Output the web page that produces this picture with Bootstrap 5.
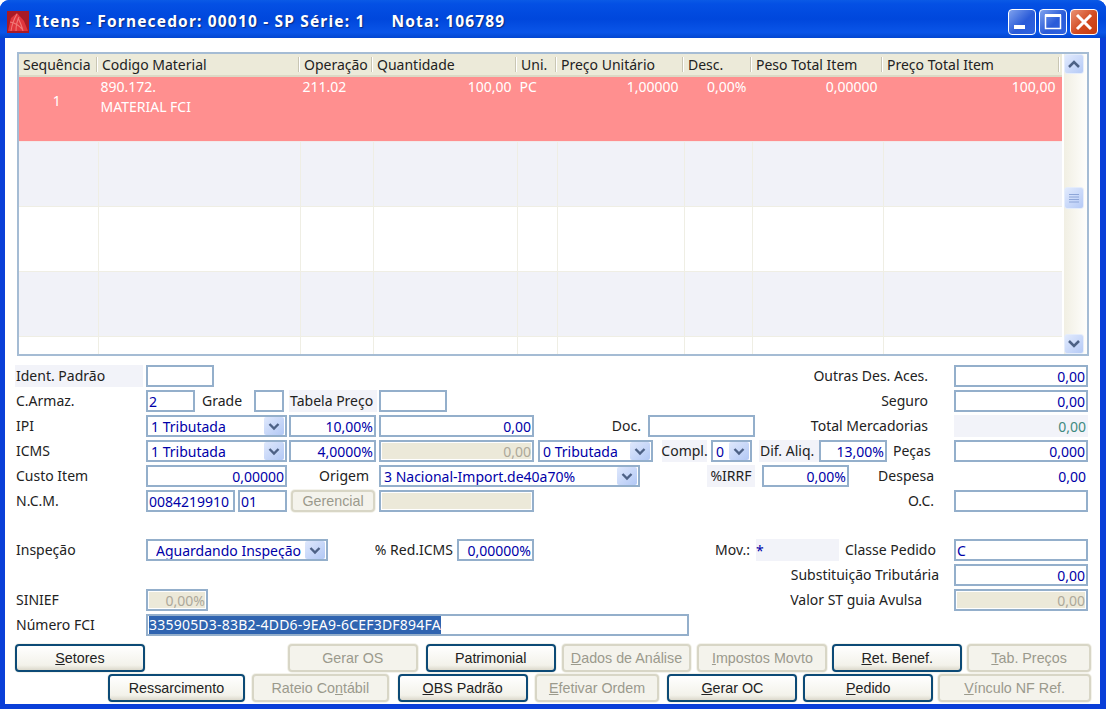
<!DOCTYPE html>
<html lang="pt">
<head>
<meta charset="utf-8">
<title>Itens</title>
<link rel="stylesheet" href="https://cdn.jsdelivr.net/npm/bootstrap@5.3.0/dist/css/bootstrap.min.css">
<style>
html,body{margin:0;height:709px;overflow:hidden;background:#fff}
body{font-family:"Noto Sans","DejaVu Sans",sans-serif;font-size:14px;color:#222}
.xpwin{width:1106px;height:709px;background:#0a3fd8;border-radius:9px 9px 0 0}
.xpbar{height:38px;padding:5px 8px 0 7px;border-radius:9px 9px 0 0;background:linear-gradient(#0a5ae6 0,#0450e4 10%,#0047dc 50%,#0a55e8 85%,#0246d0 100%)}
.xptitle{font-weight:700;font-size:15.5px;color:#fff;letter-spacing:1.17px;text-shadow:1px 1px 1px #0a2a80;white-space:pre;margin-left:6px}
.xpbtn{width:28px;height:26px;border:1px solid #fff;border-radius:4px;background:linear-gradient(135deg,#7fa2ee,#2a5bd8 55%,#2f63e0);margin-left:3px;padding:0}
.xpclose{background:linear-gradient(135deg,#ea9274,#d24a20 55%,#c63c10)}
.xpbody{flex:1 1 auto;margin:0 6px 5px 5px;background:#fff;padding:14px 0 0 10px;min-height:0}
.gridbox{width:1072px;height:304px;border:2px solid #a5bcd4;margin-left:2px;background:#fff}
.gridmain{width:1045px;overflow:hidden}
.xgrid{table-layout:fixed;width:1045px;margin:0;font-size:14px;border-collapse:collapse}
.xgrid>thead>tr>th{height:22px;padding:0 0 0 4px;font-weight:400;background:#ecead9;color:#222;border:0;border-bottom:2px solid #dcd9c6;white-space:nowrap;position:relative}
.xgrid>thead>tr>th.sep::after{content:"";position:absolute;right:0;top:3px;bottom:3px;width:2px;background:#c9c6b4;border-right:1px solid #fff}
.xgrid>thead>tr>th.seplast::after{right:4px}
.xgrid>tbody>tr>td{padding:0 5px 0 2px;height:65px;vertical-align:top;border:0;border-right:1px solid #efeee4;border-bottom:1px solid #efeee4;background:#fff;color:#222;line-height:20px}
.xgrid>tbody>tr.roweven>td{background:#f1f2f8}
.xgrid>tbody>tr.rowsel>td{background:#ff8f8f;color:#fff;border-color:#ff8f8f;border-bottom-color:#f2eaea}
.xgrid>tbody>tr.rowlast>td{height:20px;border-bottom:0}
.xgrid>tbody>tr.rowsel>td.seqcell{vertical-align:middle;padding-bottom:15px}
.c1{width:79px}.c2{width:202px}.c3{width:73px}.c4{width:144px}.c5{width:40px}.c6{width:127px}.c7{width:68px}.c8{width:131px}.c9{width:181px}
.scrolly{width:23px;margin-left:2px;background:linear-gradient(90deg,#f1efe3,#fefefc)}
.sbtn{width:20px;height:20px;border:1px solid #e5edfb;border-radius:3px;background:linear-gradient(135deg,#e1eafd,#b5caf6);display:flex;align-items:center;justify-content:center;padding:0}
.sthumb{height:22px;margin-top:113px}
.formarea{margin-top:9px;width:1076px}
.frow{display:grid;height:22px;margin-bottom:3px;align-items:stretch;font-size:14px}
.frow>*{min-width:0}
.lb{display:flex;align-items:center;white-space:nowrap;height:22px;line-height:20px;padding-left:1px}
.lbr{justify-content:flex-end;padding-right:26px}
.lbr0{padding-right:0}
.lbc{justify-content:center;padding-left:0}
.lbp{padding-left:7px}
.shade{background:#f2f3f9}
.fld,.fld:focus,.fld:disabled{height:22px;min-height:22px;padding:0 1px;border:2px solid #94afcb;border-radius:0;font-size:14px;color:#0000a8;background-color:#fff;line-height:18px;box-shadow:none;font-family:inherit;white-space:nowrap;overflow:hidden}
.fld:disabled{background-color:#ece9d9;color:#aca899;border-color:#94afcb;box-shadow:inset 0 0 0 1px #fff;opacity:1}
.num{text-align:right}
.hl{background:#2f64b0;color:#fff;letter-spacing:.22px}
.sel,.sel:focus{padding:1px 20px 0 3px;height:22px;min-height:22px;border:2px solid #94afcb;border-radius:0;font-size:14px;color:#0000a8;box-shadow:none;font-family:inherit;line-height:18px;background-color:#fff;background-position:right 1px center;background-size:20px 18px;background-repeat:no-repeat;background-image:url("data:image/svg+xml,%3Csvg xmlns='http://www.w3.org/2000/svg' viewBox='0 0 20 18'%3E%3Cdefs%3E%3ClinearGradient id='g' x1='0' y1='0' x2='1' y2='1'%3E%3Cstop offset='0' stop-color='%23dfe8fc'/%3E%3Cstop offset='1' stop-color='%23b2c8f5'/%3E%3C/linearGradient%3E%3C/defs%3E%3Crect width='20' height='18' rx='2' fill='url(%23g)'/%3E%3Cpath d='M5.5 7l4.5 4.5L14.500 7' fill='none' stroke='%234d6185' stroke-width='2.400'/%3E%3C/svg%3E")}
.selwide,.selwide:focus{padding-left:8px}
.val{display:flex;align-items:center;justify-content:flex-end;color:#0000a8;height:22px;padding-right:2px}
.teal{color:#3f8a80}
.r1{grid-template-columns:128px 3px 68px 740px 134px}
.r2{grid-template-columns:131px 49px 59px 30px 5px 88px 2px 68px 507px 134px}
.r3{grid-template-columns:131px 141px 2px 87px 3px 155px 114px 107px 173px 26px 134px}
.r4{grid-template-columns:131px 141px 2px 87px 3px 155px 4px 115px 9px 45px 4px 41px 7px 60px 68px 5px 62px 134px}
.r4b{grid-template-columns:131px 141px 92px 261px 67px 48px 7px 87px 105px 134px}
.r6{grid-template-columns:131px 89px 3px 49px 4px 84px 4px 155px 420px 134px}
.r7{grid-template-columns:131px 182px 129px 77px 222px 83px 115px 134px;margin-top:27px}
.r8{grid-template-columns:939px 134px}
.r9{grid-template-columns:131px 62px 714px 32px 134px}
.r10{grid-template-columns:131px 543px}
.pr20{padding-right:20px}.pr16{padding-right:15px}.pr10{padding-right:10px}.pr7{padding-right:7px}.pr6{padding-right:6px}.pr4{padding-right:4px}.pl6{padding-left:6px}
.btnrow{display:flex;height:30px;font-size:14px}
.btnrow1{margin-top:8px}
.xb{height:28px;width:130px;padding:0;border:2px solid #0c4a76;border-radius:4px;background:linear-gradient(#fff,#f3f2ea 80%,#dcd9cc);font-size:14.3px;color:#222;font-family:"Liberation Sans",sans-serif;line-height:22px;white-space:nowrap;box-shadow:0 0 0 1px #f4f3ec}
.xb:disabled{border-color:#d8d6c6;background:#f4f3ec;color:#9b9a8c;opacity:1}
.xg{height:22px;line-height:16px}
.gap-a{margin-left:143px}.ms7{margin-left:7px}.ms6{margin-left:6px}.ms5{margin-left:5px}.ms93{margin-left:93px}.ms9{margin-left:9px}.ms8{margin-left:8px}
.w124{width:124px}.w137{width:137px}.w137b{width:137px}.w125{width:125px}.w153{width:153px}
</style>
</head>
<body>
<div class="xpwin d-flex flex-column">
  <div class="xpbar d-flex align-items-center">
    <svg width="22" height="22" viewBox="0 0 22 22"><rect width="22" height="22" fill="#a81a26"/><path d="M1 20 4 7l6-5 7 8 4 10z" fill="#e0353c"/><path d="M4 20C5 13 7 8 10 3M9 20c0-6 1-10 3-14M16 20c-1-5-3-9-5-13M3 11c5 1 9 3 13 8" fill="none" stroke="#f07a78" stroke-width="1.100"/></svg>
    <div class="xptitle">Itens - Fornecedor: 00010 - SP Série: 1     Nota: 106789</div>
    <div class="ms-auto d-flex">
      <button class="xpbtn d-flex align-items-end justify-content-start" aria-label="Minimizar"><svg width="26" height="24" viewBox="0 0 26 24"><rect x="5" y="15" width="11" height="4" fill="#fff"/></svg></button>
      <button class="xpbtn" aria-label="Maximizar"><svg width="26" height="24" viewBox="0 0 26 24"><path d="M5.500 5.500h15v13h-15z" fill="none" stroke="#fff" stroke-width="1.500"/><path d="M5 5.500h16" stroke="#fff" stroke-width="3"/></svg></button>
      <button class="xpbtn xpclose" aria-label="Fechar"><svg width="26" height="24" viewBox="0 0 26 24"><path d="M6 5l14 14M20 5 6 19" stroke="#fff" stroke-width="3"/></svg></button>
    </div>
  </div>
  <div class="xpbody">
    <div class="gridbox d-flex">
      <div class="gridmain">
        <table class="table xgrid">
          <colgroup><col class="c1"><col class="c2"><col class="c3"><col class="c4"><col class="c5"><col class="c6"><col class="c7"><col class="c8"><col class="c9"></colgroup>
          <thead><tr><th class="sep">Sequência</th><th class="sep">Codigo Material</th><th class="sep">Operação</th><th class="sep">Quantidade</th><th class="sep">Uni.</th><th class="sep">Preço Unitário</th><th class="sep">Desc.</th><th class="sep">Peso Total Item</th><th class="sep seplast">Preço Total Item</th></tr></thead>
          <tbody>
            <tr class="rowsel"><td class="text-center seqcell">1</td><td>890.172.<br>MATERIAL FCI</td><td>211.02</td><td class="text-end">100,00</td><td>PC</td><td class="text-end">1,00000</td><td class="text-end">0,00%</td><td class="text-end">0,00000</td><td class="text-end pe-2">100,00</td></tr>
            <tr class="roweven"><td></td><td></td><td></td><td></td><td></td><td></td><td></td><td></td><td></td></tr>
            <tr><td></td><td></td><td></td><td></td><td></td><td></td><td></td><td></td><td></td></tr>
            <tr class="roweven"><td></td><td></td><td></td><td></td><td></td><td></td><td></td><td></td><td></td></tr>
            <tr class="rowlast"><td></td><td></td><td></td><td></td><td></td><td></td><td></td><td></td><td></td></tr>
          </tbody>
        </table>
      </div>
      <div class="scrolly d-flex flex-column">
        <button class="sbtn" aria-label="Acima"><svg width="14" height="10" viewBox="0 0 14 10"><path d="M2 8l5-5 5 5" fill="none" stroke="#4d6185" stroke-width="2.500"/></svg></button>
        <button class="sbtn sthumb" aria-label="Barra"><svg width="12" height="11" viewBox="0 0 12 11"><path d="M1 1.500h10M1 4h10M1 6.500h10M1 9h10" stroke="#8ea6d8"/></svg></button>
        <button class="sbtn mt-auto" aria-label="Abaixo"><svg width="14" height="10" viewBox="0 0 14 10"><path d="M2 2l5 5 5-5" fill="none" stroke="#4d6185" stroke-width="2.500"/></svg></button>
      </div>
    </div>
    <div class="formarea">
      <div class="frow r1"><div class="lb shade">Ident. Padrão</div><div></div><input class="form-control fld"><div class="lb lbr">Outras Des. Aces.</div><input class="form-control fld num" value="0,00"></div>
      <div class="frow r2"><div class="lb">C.Armaz.</div><input class="form-control fld" value="2"><div class="lb lbp">Grade</div><input class="form-control fld"><div></div><div class="lb shade">Tabela Preço</div><div></div><input class="form-control fld"><div class="lb lbr">Seguro</div><input class="form-control fld num" value="0,00"></div>
      <div class="frow r3"><div class="lb">IPI</div><select class="form-select sel"><option>1 Tributada</option></select><div></div><input class="form-control fld num" value="10,00%"><div></div><input class="form-control fld num" value="0,00"><div class="lb lbr pr7">Doc.</div><input class="form-control fld"><div class="lb lbr lbr0">Total Mercadorias</div><div></div><div class="val teal shade">0,00</div></div>
      <div class="frow r4"><div class="lb">ICMS</div><select class="form-select sel"><option>1 Tributada</option></select><div></div><input class="form-control fld num" value="4,0000%"><div></div><input class="form-control fld num" disabled value="0,00"><div></div><select class="form-select sel"><option>0 Tributada</option></select><div></div><div class="lb lbc shade">Compl.</div><div></div><select class="form-select sel"><option>0</option></select><div></div><div class="lb shade">Dif. Aliq.</div><input class="form-control fld num" value="13,00%"><div></div><div class="lb">Peças</div><input class="form-control fld num" value="0,000"></div>
      <div class="frow r4b"><div class="lb">Custo Item</div><input class="form-control fld num" value="0,00000"><div class="lb lbr pr10">Origem</div><select class="form-select sel"><option>3 Nacional-Import.de40a70%</option></select><div></div><div class="lb lbc shade">%IRRF</div><div></div><input class="form-control fld num" value="0,00%"><div class="lb lbr pr20">Despesa</div><div class="val">0,00</div></div>
      <div class="frow r6"><div class="lb">N.C.M.</div><input class="form-control fld" value="0084219910"><div></div><input class="form-control fld" value="01"><div></div><button class="xb xg w-100" disabled>Gerencial</button><div></div><input class="form-control fld" disabled><div class="lb lbr pr20">O.C.</div><input class="form-control fld"></div>
      <div class="frow r7"><div class="lb">Inspeção</div><select class="form-select sel selwide"><option>Aguardando Inspeção</option></select><div class="lb lbr pr4">% Red.ICMS</div><input class="form-control fld num" value="0,00000%"><div class="lb lbr pr6">Mov.:</div><div class="val shade justify-content-start">*</div><div class="lb pl6">Classe Pedido</div><input class="form-control fld" value="C"></div>
      <div class="frow r8"><div class="lb lbr pr16">Substituição Tributária</div><input class="form-control fld num" value="0,00"></div>
      <div class="frow r9"><div class="lb">SINIEF</div><input class="form-control fld num" disabled value="0,00%"><div class="lb lbr lbr0">Valor ST guia Avulsa</div><div></div><input class="form-control fld num" disabled value="0,00"></div>
      <div class="frow r10"><div class="lb">Número FCI</div><div class="form-control fld"><span class="hl">335905D3-83B2-4DD6-9EA9-6CEF3DF894FA</span></div></div>
      <div class="btnrow btnrow1"><button class="xb"><u>S</u>etores</button><button class="xb gap-a" disabled>Gerar OS</button><button class="xb ms8">Patrimonial</button><button class="xb ms6" disabled><u>D</u>ados de Análise</button><button class="xb ms6" disabled><u>I</u>mpostos Movto</button><button class="xb ms5"><u>R</u>et. Benef.</button><button class="xb ms5 w124" disabled><u>T</u>ab. Preços</button></div>
      <div class="btnrow"><button class="xb w137 ms93">Ressarcimento</button><button class="xb ms7 w137b" disabled>Rateio Co<u>n</u>tábil</button><button class="xb ms9"><u>O</u>BS Padrão</button><button class="xb ms7 w125" disabled><u>E</u>fetivar Ordem</button><button class="xb ms8"><u>G</u>erar OC</button><button class="xb ms6"><u>P</u>edido</button><button class="xb ms5 w153" disabled><u>V</u>ínculo NF Ref.</button></div>
    </div>
  </div>
</div>
<script src="https://cdn.jsdelivr.net/npm/bootstrap@5.3.0/dist/js/bootstrap.bundle.min.js"></script>
</body>
</html>
